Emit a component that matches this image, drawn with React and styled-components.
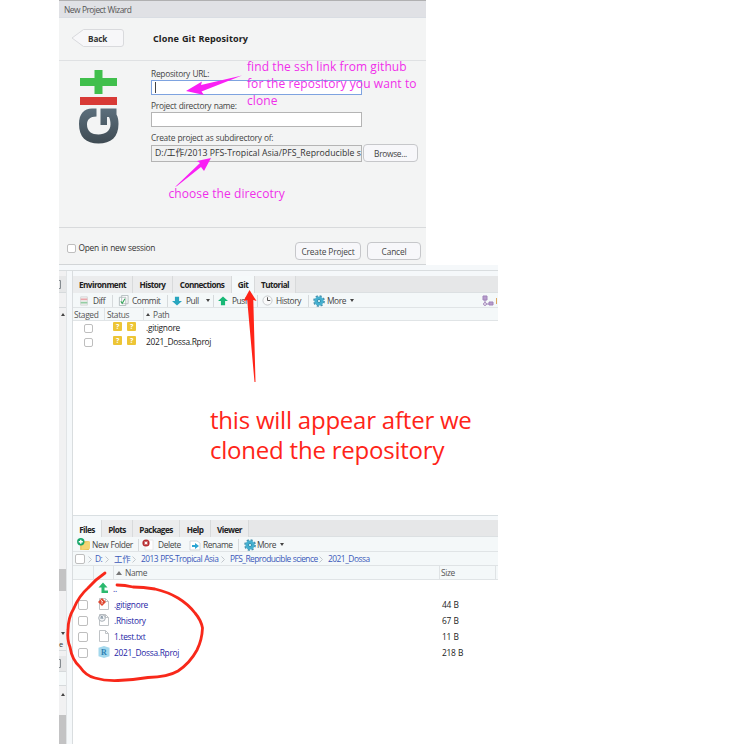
import React from "react";
import styled, { createGlobalStyle } from "styled-components";

const Global = createGlobalStyle`
  *{box-sizing:border-box}
  body{margin:0;background:#fff;font-family:"Open Sans","Noto Sans CJK SC",sans-serif;font-size:8.4px;letter-spacing:-.28px;word-spacing:.5px;line-height:12px;color:#333;white-space:nowrap;overflow:hidden}
  svg{display:block;flex:none}
`;

const Page = styled.main`position:relative;width:749px;height:755px;padding-left:59px;overflow:hidden;`;
const Text = styled.span`
  flex:none;display:block;white-space:pre;
  width:${p => (p.$w ? p.$w + "px" : "auto")};
  font-size:${p => (p.$size ? p.$size + "px" : "inherit")};
  letter-spacing:${p => (p.$ls !== undefined ? p.$ls + "px" : "inherit")};
  word-spacing:${p => (p.$ls !== undefined ? "0" : "inherit")};
  color:${p => p.$color || "inherit"};
`;

const Dialog = styled.section`width:367px;height:265px;background:#f3f4f4;border-top:1px solid #b0b0b1;border-bottom:1px solid #d2d5d7;display:flex;flex-direction:column;`;
const TitleBar = styled.header`height:17px;background:#e0e1e5;padding:3px 0 0 5px;border-bottom:1px solid #d9dde3;color:#555;letter-spacing:-.55px;`;
const DialogHead = styled.div`height:43px;border-bottom:1px solid #dfe1e3;display:flex;align-items:flex-start;padding:10px 0 0 12px;`;
const BackButton = styled.button`position:relative;width:54px;height:20px;padding:0;border:0;background:none;font:inherit;letter-spacing:0;`;
const BackShape = styled.svg`position:absolute;inset:0;`;
const BackLabel = styled.span`position:absolute;left:17px;top:5px;font-size:8.2px;font-weight:700;letter-spacing:-.1px;color:#333;`;
const Heading = styled.h1`margin:5px 0 0 28px;font-size:9.1px;line-height:12px;font-weight:700;color:#222;letter-spacing:.08px;`;
const DialogBody = styled.div`height:167px;border-bottom:1px solid #d8dadc;display:flex;padding-left:19px;`;
const LogoSlot = styled.div`width:73px;padding-top:9px;`;
const Form = styled.div`display:flex;flex-direction:column;padding-top:5px;`;
const Field = styled.div`height:32px;`;
const FieldLabel = styled.div`height:14px;line-height:15px;color:#444;`;
const FieldRow = styled.div`display:flex;align-items:center;`;
const Input = styled.div`width:211px;height:${p => (p.$path ? 17 : 15)}px;border:1px solid ${p => (p.$focus ? "#7ea3e0" : "#b4b4b4")};background:${p => (p.$path ? "#f0f1f1" : "#fff")};padding-left:3px;display:flex;align-items:center;`;
const Caret = styled.i`width:1px;height:11px;background:#444;`;
const Button = styled.button`width:${p => p.$w}px;height:18px;border:1px solid #c6c7ca;border-radius:4px;background:#f7f7fa;padding:1px 0 0;font:inherit;letter-spacing:${p => p.$ls || 0}px;color:#444;display:flex;align-items:center;justify-content:center;flex:none;margin-left:${p => p.$gap || 0}px;`;
const DialogFoot = styled.div`height:36px;display:flex;align-items:flex-start;padding:14px 0 0 8px;`;
const Check = styled.i`flex:none;width:${p => p.$s || 9}px;height:${p => p.$s || 9}px;margin-top:${p => p.$drop || 0}px;border:1px solid #bebebe;border-radius:2px;background:#fff;`;
const FootButtons = styled.div`display:flex;gap:6px;margin-left:auto;padding-right:5px;`;

const Workbench = styled.section`width:439px;height:479px;background:#f5f8fa;`;
const WorkbenchTop = styled.div`height:6px;border-bottom:1px solid #d9dddf;`;
const Split = styled.div`display:grid;grid-template-columns:8px 5px 426px;height:473px;`;
const Strip = styled.aside`background:#f1f1f2;display:flex;flex-direction:column;border-right:1px solid #e1e4e6;`;
const StripPart = styled.div`height:${p => p.$h}px;background:${p => p.$bg || "transparent"};border-bottom:${p => (p.$line ? "1px solid #d6dadc" : "0")};display:flex;align-items:center;justify-content:${p => (p.$left ? "flex-start" : "center")};flex:none;font-size:7.5px;`;
const Gutter = styled.div`background:#f5f8fa;`;
const Panes = styled.div`display:flex;flex-direction:column;border-left:1px solid #d9dddf;padding-top:5px;gap:4px;`;
const Pane = styled.div`height:${p => p.$h}px;background:#fff;border-bottom:${p => (p.$last ? "0" : "1px solid #d9dfe2")};flex:none;`;
const Tabs = styled.nav`height:17px;background:#e6e7e8;border-bottom:1px solid #dce0e2;display:flex;`;
const Tab = styled.div`width:${p => p.$w}px;height:17px;border-right:1px solid #d8dadb;background:${p => (p.$active ? "#f5f9fa" : "#ebeced")};text-align:center;line-height:${p => p.$lh || 17}px;font-size:8.2px;font-weight:700;color:#222;letter-spacing:-.56px;`;
const Toolbar = styled.div`height:15px;background:#f4f8f9;border-bottom:1px solid #e0e4e6;display:flex;align-items:center;letter-spacing:-.42px;padding-top:1px;`;
const Tool = styled.div`width:${p => p.$w}px;display:flex;align-items:center;flex:none;gap:${p => p.$gap ?? 4}px;padding-left:${p => p.$pad || 0}px;height:12px;border-left:${p => (p.$line ? "1px solid #d6dadc" : "0")};color:#444;`;
const Sliver = styled.i`width:1px;height:6px;background:#dca65e;`;
const Down = styled.i`border:2px solid transparent;border-top:3px solid #444;border-bottom:0;margin-left:${p => p.$m || 0}px;`;
const Up = styled.i`border:${p => p.$s || 2.5}px solid transparent;border-bottom:${p => (p.$s || 2.5) + 1}px solid ${p => p.$color || "#444"};border-top:0;`;
const Columns = styled.div`height:${p => p.$h}px;background:#f4f8f9;border-bottom:1px solid #e0e4e6;display:flex;letter-spacing:-.36px;`;
const Column = styled.div`width:${p => p.$w}px;flex:none;border-right:${p => (p.$open ? "0" : "1px solid #dfe3e5")};padding:1px 0 0 ${p => p.$pad ?? 2}px;display:flex;align-items:center;gap:3px;color:#555;`;
const StatusRow = styled.div`height:14px;display:flex;align-items:center;padding-left:11px;color:#222;`;
const Badges = styled.div`display:flex;gap:5px;width:33px;margin-left:20px;`;
const Badge = styled.b`width:9px;height:9px;margin-top:-3px;background:#edc536;border-radius:1px;color:#fff;font-size:7px;line-height:9px;text-align:center;`;
const Crumbs = styled.div`height:14px;background:#f4f8f9;border-bottom:1px solid #dfe3e5;display:flex;align-items:center;padding:1px 0 0 2px;color:#3b59ba;letter-spacing:-.5px;`;
const Crumb = styled.div`width:${p => p.$w}px;flex:none;display:flex;align-items:center;justify-content:space-between;padding-right:${p => p.$end ?? 5}px;letter-spacing:${p => (p.$ls !== undefined ? p.$ls + "px" : "inherit")};`;
const FileRow = styled.div`height:16px;display:flex;align-items:center;padding:1px 0 0 5px;color:#222;`;
const FileIcon = styled.div`width:12px;height:12px;margin-left:${p => (p.$up ? 20 : 10)}px;margin-right:${p => (p.$up ? 3 : 4)}px;margin-top:-2px;flex:none;`;

const Overlay = styled.svg`position:absolute;left:0;top:0;pointer-events:none;`;
const Note = styled.p`position:absolute;margin:0;left:${p => p.$x}px;top:${p => p.$y}px;white-space:pre;color:${p => p.$color};font-size:${p => p.$size}px;line-height:${p => p.$lh}px;letter-spacing:${p => p.$ls || 0}px;word-spacing:0;font-weight:${p => p.$weight || 400};`;

const GitLogo = () => (
  <svg width="42" height="75" viewBox="0 0 42 75">
    <defs><linearGradient id="steel" x1="0" y1="0" x2="0" y2="1"><stop stopColor="#5c6f7c" /><stop offset="1" stopColor="#3f4b53" /></linearGradient></defs>
    <path d="M16.5 0h8v8H39v8H24.5v8h-8v-8H2V8h14.5Z" fill="#40bf4c" />
    <path d="M2 27h37v8H2Z" fill="#d83a36" />
    <path d="M18.5 38.5v8C12 46.500 9 49.500 9 54.500c0 7 5 10 11.500 10S32.500 61 32.500 54.500c0-3-.5-5.500-1.500-7.500h-2v8h-6.500V38.500H38.500v6C40 47 40.500 50 40.500 54c0 13-7.500 19.500-20 19.500S1 67 1 54C1 44 6 38.500 14 38.500Z" fill="url(#steel)" />
  </svg>
);
const Sheet = () => <path d="M1.5.5h6l3 3v8h-9Z M7.5.5v3h3" fill="#fff" stroke="#bfc3c6" />;
const Gear = () => (
  <svg width="12" height="12" viewBox="0 0 12 12">
    <circle cx="6" cy="6" r="5" fill="none" stroke="#4992ae" strokeWidth="1.8" strokeDasharray="2.1 1.83" />
    <circle cx="6" cy="6" r="4.6" fill="#45b0d0" /><circle cx="6" cy="6" r="1.7" fill="#c4e6ed" stroke="#3596b5" />
  </svg>
);
const Icon = ({ kind, size = 12 }) => (
  <svg width={size} height={size} viewBox="0 0 12 12">
    {kind === "diff" && <><path d="M2 1h8v10H2Z" fill="#eff0ef" stroke="#d2d5d5" /><path d="M2 3h8v2H2Z" fill="#eaa5aa" /><path d="M2 7h8v2H2Z" fill="#93cda2" /></>}
    {kind === "commit" && <><path d="M4 .5h7v9H4Z M1.5 2.5h7v9h-7Z" fill="#fff" stroke="#b1bbbd" /><path d="m3 7 1.7 2L7.5 4" fill="none" stroke="#35a85a" strokeWidth="1.2" /></>}
    {kind === "pull" && <path d="M3.500 1h5v5H12l-6 5.500L0 6h3.500Z" fill="#29a6bf" />}
    {kind === "push" && <path d="M3.500 11h5V6H12L6 .5 0 6h3.500Z" fill="#18b876" />}
    {kind === "clock" && <><circle cx="6" cy="6" r="5" fill="#fafafa" stroke="#c4c8ca" /><path d="M6 2.5V6H9" fill="none" stroke="#444" /></>}
    {kind === "branch" && <><path d="M1 1h4v4H1Z M7 7h4v3H7Z" fill="#b79dcc" stroke="#a083b9" /><path d="M3 5v4h4" fill="none" stroke="#a083b9" /><circle cx="3" cy="9" r="1.4" fill="#fff" stroke="#a083b9" /></>}
    {kind === "folder" && <><path d="M3 3h8v8H3Z" fill="#e8b944" /><path d="m4 5 8-2v7l-8 1Z" fill="#f4d574" /><circle cx="3.500" cy="3.500" r="3.400" fill="#16a66a" /><path d="M3.500 1.600v3.800M1.600 3.500h3.800" stroke="#fff" strokeWidth="1.300" /></>}
    {kind === "delete" && <><path d="M5 1h6v10H3V5" fill="#fff" stroke="#e8e8e8" /><circle cx="4" cy="4" r="3.600" fill="#b72c30" /><path d="m2.600 2.600 2.800 2.800m0-2.800L2.600 5.400" stroke="#fff" strokeWidth="1.200" /></>}
    {kind === "rename" && <><path d="M1 2h7l3 2v7H1Z" fill="#fff" stroke="#d2d6d9" /><path d="M3 6h3V4l4 3-4 3V8H3Z" fill="#2ca5d3" /></>}
    {kind === "up" && <path d="M10 11H3.500V5.500H.5L5 .5l4.500 5h-3v3H10Z" fill="#2bb96e" />}
    {kind === "git" && <><Sheet /><path d="m4 0 4 4-4 4-4-4Z" fill="#df4933" /><path d="m3 2 2 2M4 3v3" stroke="#fff" strokeWidth=".7" /></>}
    {kind === "history" && <><Sheet /><circle cx="4" cy="4" r="3.300" fill="#f4f6f8" stroke="#a8afb6" /><path d="M3 5V2.500h1.500v1.300H3m1.500 0L5 5" fill="none" stroke="#6f8392" strokeWidth=".7" /></>}
    {kind === "text" && <Sheet />}
    {kind === "project" && <><path d="m6 0 5.500 1.800v8.400L6 12 .5 10.200V1.800Z" fill="#a3d8ed" /><text x="6" y="8.500" textAnchor="middle" letterSpacing="0" fontFamily="Liberation Serif" fontWeight="700" fontSize="8" fill="#2c7fb3">R</text></>}
  </svg>
);
const Sep = () => <svg width="4" height="7" viewBox="0 0 4 7"><path d="m.5.5 3 3-3 3" fill="none" stroke="#c3c8cd" /></svg>;
const Bracket = () => <svg width="2" height="9" viewBox="0 0 2 9"><path d="M0 .5h1.500v8H0" stroke="#858b90" fill="none" /></svg>;

const files = [
  ["git", ".gitignore", "44 B"],
  ["history", ".Rhistory", "67 B"],
  ["text", "1.test.txt", "11 B"],
  ["project", "2021_Dossa.Rproj", "218 B"],
];

function CloneDialog() {
  return (
    <Dialog>
      <TitleBar>New Project Wizard</TitleBar>
      <DialogHead>
        <BackButton>
          <BackShape width="54" height="20"><path d="M12.5 1.5H50q2.500 0 2.500 2.500v12q0 2.500-2.500 2.500H12.5L1 10Z" fill="#f7f7f9" stroke="#d9dadd" /></BackShape>
          <BackLabel>Back</BackLabel>
        </BackButton>
        <Heading>Clone Git Repository</Heading>
      </DialogHead>
      <DialogBody>
        <LogoSlot><GitLogo /></LogoSlot>
        <Form>
          <Field><FieldLabel>Repository URL:</FieldLabel><Input $focus><Caret /></Input></Field>
          <Field><FieldLabel>Project directory name:</FieldLabel><Input /></Field>
          <Field>
            <FieldLabel>Create project as subdirectory of:</FieldLabel>
            <FieldRow>
              <Input $path><Text $size={8.7} $ls={0.03}>D:/工作/2013 PFS-Tropical Asia/PFS_Reproducible s</Text></Input>
              <Button $w={55} $gap={1} $ls={-0.3}>Browse...</Button>
            </FieldRow>
          </Field>
        </Form>
      </DialogBody>
      <DialogFoot>
        <Check $drop={2} /><Text> Open in new session</Text>
        <FootButtons><Button $w={66} $ls={-0.15}>Create Project</Button><Button $w={54} $ls={-0.15}>Cancel</Button></FootButtons>
      </DialogFoot>
    </Dialog>
  );
}

function GitPane() {
  return (
    <Pane $h={240}>
      <Tabs><Tab $w={60}>Environment</Tab><Tab $w={40}>History</Tab><Tab $w={59}>Connections</Tab><Tab $w={23} $active>Git</Tab><Tab $w={41}>Tutorial</Tab></Tabs>
      <Toolbar>
        <Tool $w={39} $pad={6}><Icon kind="diff" size={10} /><Text>Diff</Text></Tool>
        <Tool $w={55} $pad={5} $gap={3} $line><Icon kind="commit" size={11} /><Text>Commit</Text></Tool>
        <Tool $w={46} $pad={4} $line><Icon kind="pull" size={10} /><Text>Pull</Text><Down $m={3} /></Tool>
        <Tool $w={44} $pad={4} $line><Icon kind="push" size={10} /><Text>Push</Text></Tool>
        <Tool $w={51} $pad={4} $gap={3} $line><Icon kind="clock" size={11} /><Text>History</Text></Tool>
        <Tool $w={174} $pad={4} $gap={2} $line><Gear /><Text>More</Text><Down $m={2} /></Tool>
        <Tool $w={15} $gap={2}><Icon kind="branch" /><Sliver /></Tool>
      </Toolbar>
      <Columns $h={13}><Column $w={32} $pad={1}>Staged</Column><Column $w={39}>Status</Column><Column $w={354} $open><Up />Path</Column></Columns>
      {[".gitignore", "2021_Dossa.Rproj"].map(n => <StatusRow key={n}><Check /><Badges><Badge>?</Badge><Badge>?</Badge></Badges><Text>{n}</Text></StatusRow>)}
    </Pane>
  );
}

function FilesPane() {
  return (
    <Pane $h={224} $last>
      <Tabs><Tab $w={29} $lh={19} $active>Files</Tab><Tab $w={31} $lh={19}>Plots</Tab><Tab $w={47} $lh={19}>Packages</Tab><Tab $w={31} $lh={19}>Help</Tab><Tab $w={38} $lh={19}>Viewer</Tab></Tabs>
      <Toolbar>
        <Tool $w={65} $pad={4} $gap={2}><Icon kind="folder" size={13} /><Text>New Folder</Text></Tool>
        <Tool $w={48} $pad={3} $gap={4} $line><Icon kind="delete" /><Text>Delete</Text></Tool>
        <Tool $w={52} $pad={3} $gap={2}><Icon kind="rename" /><Text>Rename</Text></Tool>
        <Tool $w={60} $pad={5} $gap={1} $line><Gear /><Text>More</Text><Down $m={3} /></Tool>
      </Toolbar>
      <Crumbs>
        <Crumb $w={20} $end={3}><Check $s={10} /><Sep /></Crumb>
        <Crumb $w={19}>D: <Sep /></Crumb><Crumb $w={27} $ls={0}>工作 <Sep /></Crumb>
        <Crumb $w={89}>2013 PFS-Tropical Asia <Sep /></Crumb>
        <Crumb $w={98} $ls={-0.55}>PFS_Reproducible science <Sep /></Crumb><Crumb $w={60}>2021_Dossa</Crumb>
      </Crumbs>
      <Columns $h={14}><Column $w={21} /><Column $w={20} /><Column $w={326}><Up $s={3} $color="#777" />Name</Column><Column $w={56} $pad={1}>Size</Column></Columns>
      <FileRow><FileIcon $up><Icon kind="up" /></FileIcon><Text $color="#2525a5">..</Text></FileRow>
      {files.map(([kind, name, size]) => (
        <FileRow key={name}><Check $s={10} /><FileIcon><Icon kind={kind} /></FileIcon><Text $w={328} $color="#2525a5">{name}</Text><Text>{size}</Text></FileRow>
      ))}
    </Pane>
  );
}

export default function App() {
  return (
    <Page>
      <Global />
      <CloneDialog />
      <Workbench>
        <WorkbenchTop />
        <Split>
          <Strip>
            <StripPart $h={5} /><StripPart $h={17} $bg="#e6e7e8" $line $left><Bracket /></StripPart><StripPart $h={15} $line />
            <StripPart $h={13}><Up $s={2} /></StripPart><StripPart $h={248} />
            <StripPart $h={22} $bg="#c3c3c4" /><StripPart $h={37} /><StripPart $h={10}><Down /></StripPart>
            <StripPart $h={13} $line $left>e</StripPart><StripPart $h={5} /><StripPart $h={16} $bg="#e6e7e8" $line $left><Bracket /></StripPart>
            <StripPart $h={14} $bg="#f4f8f9" $line /><StripPart $h={16}><Up $s={2} /></StripPart><StripPart $h={13} /><StripPart $h={29} $bg="#c3c3c4" />
          </Strip>
          <Gutter />
          <Panes><GitPane /><FilesPane /></Panes>
        </Split>
      </Workbench>
      <Note $x={247} $y={59} $size={12} $lh={16.8} $ls={0.08} $weight={500} $color="#f02eea">{"find the ssh link from github\nfor the repository you want to\nclone"}</Note>
      <Note $x={168.5} $y={184.500} $size={12} $lh={17} $ls={0.08} $weight={500} $color="#f02eea">choose the direcotry</Note>
      <Note $x={210} $y={404.500} $size={24} $lh={30} $ls={-0.22} $color="#ff2418">{"this will appear after we\ncloned the repository"}</Note>
      <Overlay width="749" height="755">
        <g fill="#fa20f5"><path d="M242 75.500 201 85 202 81.500 186 91 204 95 201.500 91.500Z" /><path d="m175 187 25-24-3-2 14-3-7 13-3-4-24 19Z" /></g>
        <path d="M249.500 290 243.500 301 247.200 300 254.500 382H255.500L253.300 300 256.500 301Z" fill="#ff2418" />
        <path d="M105 573Q96 579 88 588Q79 596 74 608Q68 618 68 630Q67 640 70 647Q72 660 80 667Q86 676 95 678Q105 681 118 680.500Q133 680 148 677.500Q168 677 178 671Q190 663 197 650Q202 640 202.500 628Q201 620 195 613Q188 604 178 598Q168 592 155 589Q143 587 133 587Q125 585 117 585" fill="none" stroke="#f8281a" strokeWidth="2.800" strokeLinecap="round" />
      </Overlay>
    </Page>
  );
}
